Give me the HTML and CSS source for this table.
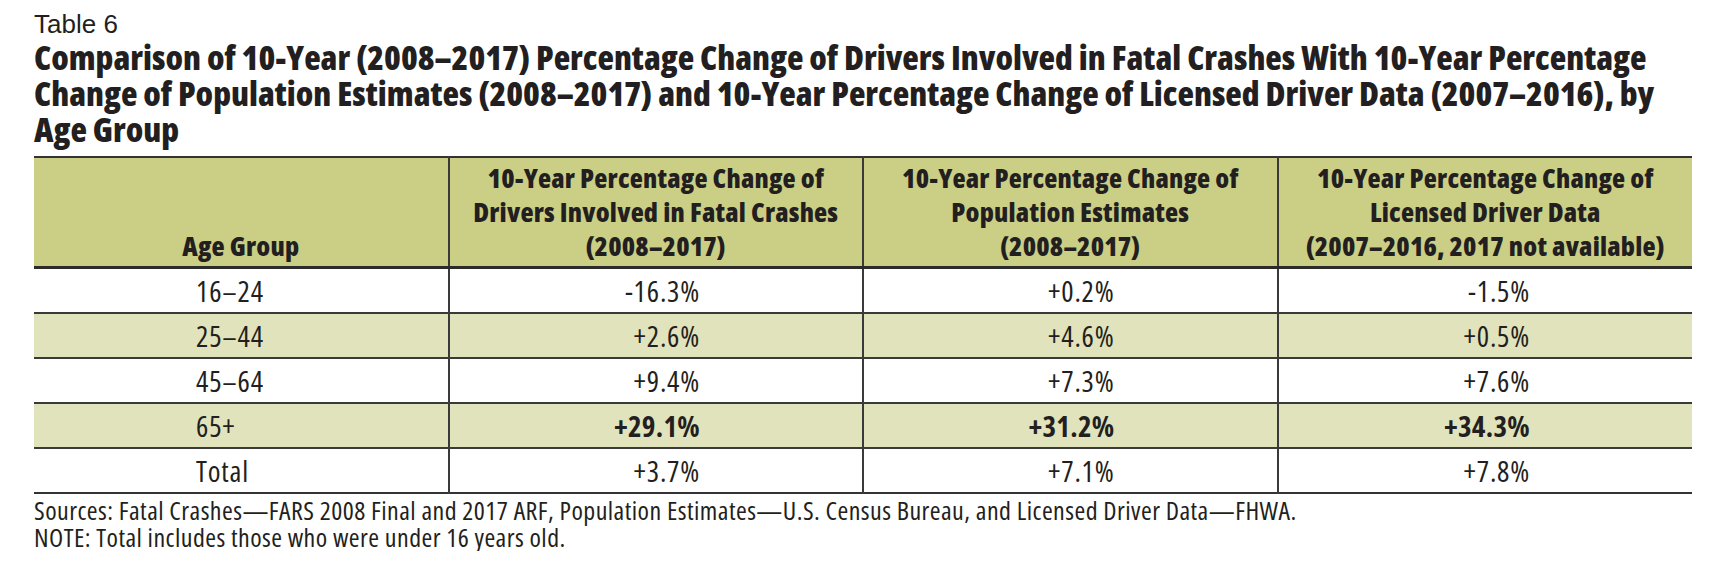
FILE: index.html
```html
<!DOCTYPE html>
<html lang="en">
<head>
<meta charset="utf-8">
<title>Table 6</title>
<link rel="stylesheet" href="styles.css">
</head>
<body>
<div class="page">
  <div class="label">Table 6</div>
  <h1 class="title"><span class="tl">Comparison of 10-Year (2008–2017) Percentage Change of Drivers Involved in Fatal Crashes With 10-Year Percentage</span><br><span class="tl">Change of Population Estimates (2008–2017) and 10-Year Percentage Change of Licensed Driver Data (2007–2016), by</span><br><span class="tl">Age Group</span></h1>
  <table class="data">
    <colgroup><col><col><col><col></colgroup>
    <thead>
      <tr>
        <th>Age Group</th>
        <th>10-Year Percentage Change of<br>Drivers Involved in Fatal Crashes<br>(2008–2017)</th>
        <th>10-Year Percentage Change of<br>Population Estimates<br>(2008–2017)</th>
        <th>10-Year Percentage Change of<br>Licensed Driver Data<br>(2007–2016, 2017 not available)</th>
      </tr>
    </thead>
    <tbody>
      <tr><td>16–24</td><td>-16.3%</td><td>+0.2%</td><td>-1.5%</td></tr>
      <tr class="alt"><td>25–44</td><td>+2.6%</td><td>+4.6%</td><td>+0.5%</td></tr>
      <tr><td>45–64</td><td>+9.4%</td><td>+7.3%</td><td>+7.6%</td></tr>
      <tr class="alt strong"><td>65+</td><td>+29.1%</td><td>+31.2%</td><td>+34.3%</td></tr>
      <tr><td>Total</td><td>+3.7%</td><td>+7.1%</td><td>+7.8%</td></tr>
    </tbody>
  </table>
  <div class="notes">
    <p>Sources: Fatal Crashes—FARS 2008 Final and 2017 ARF, Population Estimates—U.S. Census Bureau, and Licensed Driver Data—FHWA.</p>
    <p>NOTE: Total includes those who were under 16 years old.</p>
  </div>
</div>
</body>
</html>
```

FILE: styles.css
```css
html, body {
  margin: 0;
  padding: 0;
  background: #ffffff;
}

.page {
  padding: 9px 0 0 34px;
  color: #231f20;
  font-family: "Open Sans", "DejaVu Sans Condensed", sans-serif;
  font-stretch: 75%;
}

.label {
  font-family: "Liberation Sans", Arial, sans-serif;
  font-stretch: normal;
  font-size: 26px;
  line-height: 30px;
}

.title {
  margin: 0;
  font-size: 34px;
  line-height: 36px;
  font-weight: 800;
  letter-spacing: 0;
}

.tl {
  white-space: nowrap;
}

.data {
  margin-top: 9px;
  width: 1658px;
  table-layout: fixed;
  border-collapse: collapse;
  border-top: 2px solid #333333;
  border-bottom: 2px solid #333333;
}

.data col {
  width: 25%;
}

.data th {
  background: #cbcf85;
  font-size: 27px;
  line-height: 34px;
  font-weight: 800;
  letter-spacing: 0.2px;
  text-align: center;
  vertical-align: bottom;
  padding: 3px 4px 3px;
  border-left: 2px solid #3a3a3a;
  border-bottom: 3px solid #2b2b2b;
  white-space: nowrap;
}

.data td {
  height: 43px;
  padding: 0 162px 0 0;
  font-size: 29px;
  line-height: 43px;
  letter-spacing: 0.8px;
  text-align: right;
  border-left: 2px solid #3a3a3a;
  border-top: 2px solid #3a3a3a;
  white-space: nowrap;
}

.data th:first-child,
.data td:first-child {
  border-left: none;
}

.data td:first-child {
  text-align: left;
  padding: 0 0 0 162px;
}

.data tr.alt td {
  background: #e1e3bc;
}

.data tr.strong td:not(:first-child) {
  font-weight: 700;
  letter-spacing: 0.3px;
}

.notes {
  margin-top: 3px;
  font-size: 26px;
  line-height: 27px;
  letter-spacing: 0.45px;
}

.notes p {
  margin: 0;
}
```
